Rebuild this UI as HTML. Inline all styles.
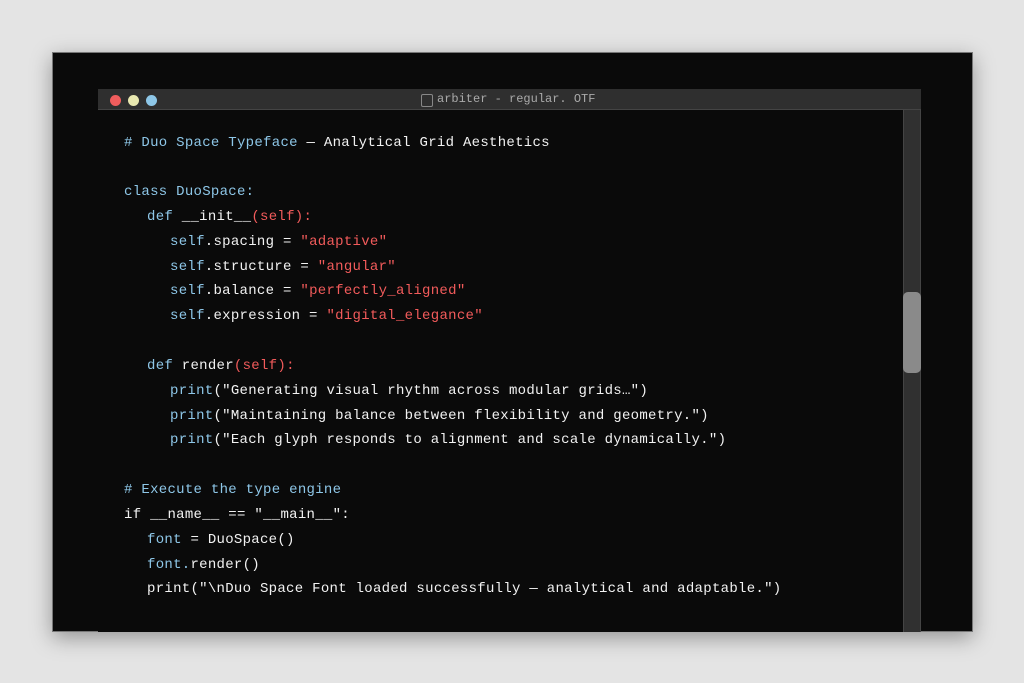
<!DOCTYPE html>
<html><head><meta charset="utf-8"><style>
html,body{margin:0;padding:0;}
body{width:1024px;height:683px;background:#e4e4e4;position:relative;overflow:hidden;font-family:"Liberation Mono",monospace;}
.outer{position:absolute;left:52px;top:52px;width:921px;height:580px;background:#0a0a0a;box-shadow:0 6px 20px rgba(0,0,0,0.35);border:1px solid #777;box-sizing:border-box;}
.win{position:absolute;left:98px;top:89px;width:823px;height:543px;background:#0a0a0a;}
.title{position:absolute;left:98px;top:89px;width:823px;height:21px;background:#2f2f2f;border-bottom:1px solid #444;box-sizing:border-box;}
.dot{position:absolute;top:6px;width:11px;height:11px;border-radius:50%;}
.ttl{position:absolute;top:3px;font-size:12px;color:#aaa;}
.box{position:absolute;top:5px;width:10px;height:11px;border:1px solid #888;border-radius:2px;}
.sb{position:absolute;left:903px;top:110px;width:18px;height:522px;background:#303030;border-left:1px solid #444;border-right:1px solid #444;box-sizing:border-box;}
.th{position:absolute;left:903px;top:292px;width:18px;height:81px;background:#8a8a8a;border-radius:5px;}
.code{position:absolute;left:124px;top:130.5px;font-size:14px;letter-spacing:0.29px;line-height:24.83px;color:#f2f2f2;}
.code div{height:24.83px;white-space:pre;}
.i1{display:inline-block;width:23px}.i2{display:inline-block;width:46px}
.b{color:#8ec7e8}.r{color:#f25b5b}
</style></head><body>
<div class="outer"></div>
<div class="win"></div>
<div class="title">
<div class="dot" style="left:12px;background:#f05d5d"></div>
<div class="dot" style="left:30px;background:#e8e8b0"></div>
<div class="dot" style="left:48px;background:#8ec7e8"></div>
<div class="box" style="left:323px"></div>
<div class="ttl" style="left:339px">arbiter - regular. OTF</div>
</div>
<div class="sb"></div><div class="th"></div>
<div class="code"><div><span class="b"># Duo Space Typeface</span> — Analytical Grid Aesthetics</div><div></div><div><span class="b">class DuoSpace:</span></div><div><span class="i1"></span><span class="b">def</span> __init__<span class="r">(self):</span></div><div><span class="i2"></span><span class="b">self</span>.spacing = <span class="r">"adaptive"</span></div><div><span class="i2"></span><span class="b">self</span>.structure = <span class="r">"angular"</span></div><div><span class="i2"></span><span class="b">self</span>.balance = <span class="r">"perfectly_aligned"</span></div><div><span class="i2"></span><span class="b">self</span>.expression = <span class="r">"digital_elegance"</span></div><div></div><div><span class="i1"></span><span class="b">def</span> render<span class="r">(self):</span></div><div><span class="i2"></span><span class="b">print</span>("Generating visual rhythm across modular grids…")</div><div><span class="i2"></span><span class="b">print</span>("Maintaining balance between flexibility and geometry.")</div><div><span class="i2"></span><span class="b">print</span>("Each glyph responds to alignment and scale dynamically.")</div><div></div><div><span class="b"># Execute the type engine</span></div><div>if __name__ == "__main__":</div><div><span class="i1"></span><span class="b">font</span> = DuoSpace()</div><div><span class="i1"></span><span class="b">font.</span>render()</div><div><span class="i1"></span>print("\nDuo Space Font loaded successfully — analytical and adaptable.")</div></div>
</body></html>
